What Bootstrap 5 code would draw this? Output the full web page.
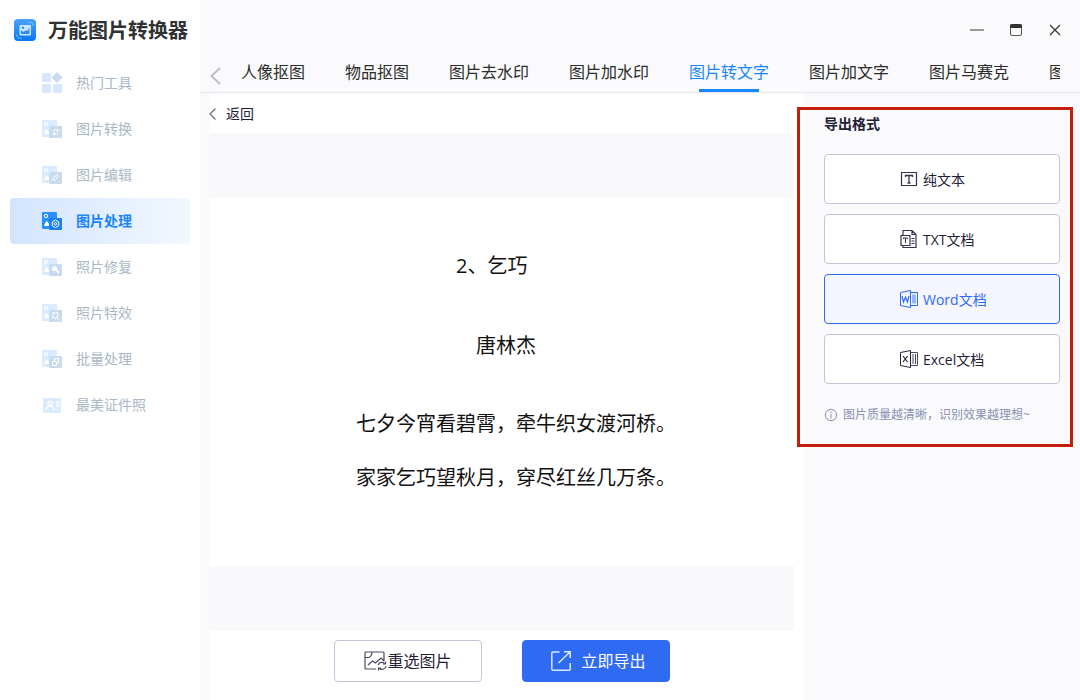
<!DOCTYPE html>
<html lang="zh-CN">
<head>
<meta charset="utf-8">
<meta name="viewport" content="width=device-width, initial-scale=1">
<title>万能图片转换器</title>
<link href="https://cdn.jsdelivr.net/npm/bootstrap@5.3.0/dist/css/bootstrap.min.css" rel="stylesheet">
<style>
body{font-family:"Open Sans","Noto Sans CJK SC",sans-serif;font-size:14px;line-height:20px;color:#1f2036;background:#fafafc}
svg{display:block;flex:none}
.sidebar{width:200px;background:#fff;flex:none}
.brand-row{height:62px;padding:0 12px;gap:10px;font-size:20px;color:#303133;white-space:nowrap}
.side-nav{margin:-2px 10px 0}
.side-link{height:46px;padding:0 30px;gap:12px;color:#aab7c6;border-radius:4px;text-decoration:none}
.side-link.active{color:#1a86fb;font-weight:700;background:linear-gradient(90deg,#d2e4ff,#f3f8ff)}
.side-link svg{--back:#daeaff;--front:#c9dbef}
.side-link.active svg{--back:#2b90ff;--front:#1a80f5}
.plain-btn{background:none;border:0;padding:0;color:#333}
.title-row{height:60px;padding:0 19px;gap:26px}
.tab-bar{height:33px;border-bottom:1px solid #e6e6ef;padding:0 20px 0 10px;gap:19px}
.tab-strip{gap:40px;overflow:hidden;flex:1 1 0;min-width:0;font-size:16px;line-height:24px}
.tab-strip a{color:#2b2b2b;text-decoration:none;white-space:nowrap;height:32px;position:relative}
.tab-strip a.active{color:#1a86fb}
.tab-strip a.active::after{content:"";position:absolute;left:10px;right:10px;bottom:0;height:3px;background:#1a86fb}
.work-area{background:#fff;margin-left:9px;padding-right:10px}
.back-row{height:40px;padding-top:2px;gap:10px;color:#1f2036}
.canvas-box{background:#f9f9fb;border-radius:4px;padding:65px 0}
.paper{background:#fff;padding:0 0 20px 147px;font-size:20px;line-height:54px;color:#111}
.paper p{margin:0;white-space:nowrap}
.paper .poem-title{text-indent:5em}
.paper .poem-author{text-indent:6em;padding:26px 0 24px}
.action-row{height:69px;gap:40px;padding-top:9px}
.action-btn{width:148px;height:42px;border-radius:4px;font-size:16px;padding:0;border:1px solid #c3c5da;background:#fff;color:#1f2036}
.action-btn.main-action{background:#2f6af3;border-color:#2f6af3;color:#fff;gap:10px;padding-left:6px}
.side-panel{width:276px;flex:none;padding:14px 7px 0 0}
.export-group{padding:7px 13px 0 20px;height:333px}
.export-group::before{content:"";position:absolute;inset:0 0 -7px -7px;border:3px solid #c41e0b;pointer-events:none}
.export-title{font-size:14px;line-height:20px;margin:0 0 20px}
.format-btn{height:50px;border:1px solid #c3c5da;border-radius:4px;background:#fff;color:#1f2036;gap:5px;padding:2px 0 0 75px}
.format-btn.active{border-color:#2f6af3;background:#f5f6ff;color:#2f6af3}
.hint-row{font-size:12px;color:#8b91b3;gap:5px;margin-top:21px;white-space:nowrap}
</style>
</head>
<body>
<svg width="0" height="0" class="position-absolute" aria-hidden="true">
  <defs>
    <g id="photo">
      <rect x="1" y="2" width="15" height="17" rx="1" fill="var(--back)"/>
      <circle cx="5" cy="6" r="1.700" fill="none" stroke="#fff"/>
      <path d="M3 16 5 11.500h1.500L8 14v2z" fill="#fff"/>
      <rect x="8" y="8" width="13" height="12" rx="1" fill="var(--front)"/>
    </g>
  </defs>
</svg>
<div class="d-flex min-vh-100">
  <aside class="sidebar">
    <div class="brand-row d-flex align-items-center fw-bold">
      <svg width="26" height="26" viewBox="0 0 26 26"><defs><linearGradient id="lg" x2="0" y2="1"><stop stop-color="#4ba2fd"/><stop offset="1" stop-color="#0878f4"/></linearGradient></defs><rect x="2" y="1" width="22" height="22" rx="4" fill="url(#lg)"/><rect x="7.500" y="7" width="11.500" height="10.500" rx="1" fill="#cfe5ff"/><path d="M9 16v-4l2.500 2 2.500-2 1.500 1 2-4v7z" fill="#2e8ef8"/><circle cx="11" cy="9.800" r="1.300" fill="#2e8ef8"/><path d="M16.500 4c3 0 4.500 1 5 4M9.500 20.500c-3 0-4.500-1-5-4" fill="none" stroke="#8fc4ff"/></svg>
      <span>万能图片转换器</span>
    </div>
    <nav class="side-nav d-flex flex-column">
      <a href="#" class="side-link d-flex align-items-center"><svg width="24" height="22" viewBox="-1 0 24 22"><g fill="#d7e7ff"><rect x="1" y="1" width="9" height="9" rx="1"/><rect x="1" y="12" width="9" height="9" rx="1"/><rect x="12" y="12" width="9" height="9" rx="1"/></g><path d="m16 0 5.500 5.500L16 11l-5.500-5.500z" fill="#c9dbef"/></svg>热门工具</a>
      <a href="#" class="side-link d-flex align-items-center"><svg width="24" height="22" viewBox="-1 0 24 22"><use href="#photo"/><path d="M12 13.500a3 3 0 0 1 5-1M17.500 14.500a3 3 0 0 1-5 1M17 11v2h-2M12.500 17v-2h2" fill="none" stroke="#fff"/></svg>图片转换</a>
      <a href="#" class="side-link d-flex align-items-center"><svg width="24" height="22" viewBox="-1 0 24 22"><use href="#photo"/><path d="M12 16.500v-2.200l3.700-3.500 1.700 1.700-3.500 3.700z" fill="none" stroke="#fff"/></svg>图片编辑</a>
      <a href="#" class="side-link active d-flex align-items-center"><svg width="24" height="22" viewBox="-1 0 24 22"><use href="#photo"/><path d="m14.500 10 3.200 1.900v3.800l-3.200 1.900-3.200-1.900v-3.800z" fill="none" stroke="#fff"/><circle cx="14.500" cy="13.800" r="1.200" fill="none" stroke="#fff"/></svg>图片处理</a>
      <a href="#" class="side-link d-flex align-items-center"><svg width="24" height="22" viewBox="-1 0 24 22"><use href="#photo"/><circle cx="13.500" cy="12.500" r="2.500" fill="#fff"/><path d="m14.500 13.500 3.500 3.500" stroke="#fff" stroke-width="2"/><path d="m12 10.500 1.500 1.700" stroke="#c9dbef"/></svg>照片修复</a>
      <a href="#" class="side-link d-flex align-items-center"><svg width="24" height="22" viewBox="-1 0 24 22"><use href="#photo"/><path d="m12 10.500 2 .5 2.500-.5v2.500l1 1.500-2 .5-.5 2-1.500-1.500-2 .5.500-2.500zM16 15.500l2 2" fill="none" stroke="#fff"/></svg>照片特效</a>
      <a href="#" class="side-link d-flex align-items-center"><svg width="24" height="22" viewBox="-1 0 24 22"><use href="#photo"/><path d="M11.500 13.500h4v4h-4zM13.500 13v-2.500h4v4.500H16" fill="none" stroke="#fff"/></svg>批量处理</a>
      <a href="#" class="side-link d-flex align-items-center"><svg width="24" height="22" viewBox="-1 0 24 22"><rect x="2" y="4" width="18" height="15" rx="1" fill="#daeaff"/><circle cx="9" cy="9.500" r="2" fill="none" stroke="#fff" stroke-width="1.300"/><path d="M5 16c.5-2.500 2-4 4-4s3.500 1.500 4 4M15 8.500h4M15 11.500h3" fill="none" stroke="#fff" stroke-width="1.300"/></svg>最美证件照</a>
    </nav>
  </aside>
  <div class="d-flex flex-column flex-grow-1" style="min-width:0">
    <div class="title-row d-flex align-items-center justify-content-end">
      <button class="plain-btn" aria-label="最小化"><svg width="14" height="12" viewBox="0 0 14 12"><path d="M0 6h14" stroke="#999" stroke-width="2"/></svg></button>
      <button class="plain-btn" aria-label="最大化"><svg width="13" height="12" viewBox="0 0 13 12"><rect x=".5" y=".5" width="11" height="11" rx="1.500" fill="none" stroke="#555"/><path d="M0 4V2Q0 0 2 0h8q2 0 2 2v2z" fill="#333"/></svg></button>
      <button class="plain-btn" aria-label="关闭"><svg width="12" height="12" viewBox="0 0 12 12"><path d="m1 1 10 10M11 1 1 11" stroke="#333" stroke-width="1.200"/></svg></button>
    </div>
    <div class="tab-bar d-flex">
      <button class="plain-btn" aria-label="向左"><svg width="12" height="18" viewBox="0 0 12 18"><path d="m10 1-8.500 8 8.500 8" fill="none" stroke="#c1c1c4" stroke-width="2"/></svg></button>
      <nav class="tab-strip d-flex">
        <a href="#">人像抠图</a><a href="#">物品抠图</a><a href="#">图片去水印</a><a href="#">图片加水印</a><a href="#" class="active">图片转文字</a><a href="#">图片加文字</a><a href="#">图片马赛克</a><a href="#">图</a>
      </nav>
    </div>
    <div class="d-flex flex-grow-1">
      <main class="work-area flex-grow-1 d-flex flex-column">
        <a href="#" class="back-row d-flex align-items-center text-decoration-none"><svg width="7" height="12" viewBox="0 0 7 12"><path d="M6.500.5 1 6l5.500 5.500" fill="none" stroke="#686880" stroke-width="1.200"/></svg>返回</a>
        <div class="canvas-box flex-grow-1 d-flex flex-column">
          <article class="paper flex-grow-1 d-flex flex-column justify-content-center">
            <p class="poem-title">2、乞巧</p>
            <p class="poem-author">唐林杰</p>
            <p>七夕今宵看碧霄，牵牛织女渡河桥。</p>
            <p>家家乞巧望秋月，穿尽红丝几万条。</p>
          </article>
        </div>
        <div class="action-row d-flex justify-content-center">
          <button class="action-btn d-flex align-items-center justify-content-center"><svg width="24" height="20" viewBox="-1 0 24 20"><g fill="none" stroke="#4a4a60" stroke-width="1.200"><path d="M12 18H2q-1 0-1-1V2q0-1 1-1h17q1 0 1 1v8M1 6.500h3q3.500 0 4-5.500M4 14l4.500-4 3 2L17 7l3 3"/><path d="M14 14a4 4 0 0 1 7-1M22 15a4 4 0 0 1-7 2M21.500 10.500V13H19M14.500 19.500V17H17"/></g></svg>重选图片</button>
          <button class="action-btn main-action d-flex align-items-center justify-content-center"><svg width="20" height="20" viewBox="0 0 20 20"><path d="M8.500 1H2Q.8 1 .8 2v16q0 1.200 1.200 1.200h16q1.200 0 1.200-1.200v-6M7.500 12 19 1M13 .8h6.200V7" fill="none" stroke="#dde7ff" stroke-width="1.500"/></svg>立即导出</button>
        </div>
      </main>
      <aside class="side-panel">
        <section class="export-group position-relative">
          <h2 class="export-title fw-bold">导出格式</h2>
          <div class="d-grid" style="gap:10px">
            <button class="format-btn d-flex align-items-center"><svg width="18" height="20" viewBox="0 0 18 20"><path d="M1.500 2.500h15v13h-15z" fill="none" stroke="#33334b" stroke-width="1.200"/><path d="M5.500 7V5.500h7V7M9 5.500v7.500M7.500 13h3" fill="none" stroke="#33334b" stroke-width="1.300"/></svg>纯文本</button>
            <button class="format-btn d-flex align-items-center"><svg width="18" height="20" viewBox="0 0 18 20"><path d="M3 5.500V.5h9l4 4v13H3v-2M12 .5v4h4M1 5.500h9v10H1zM11.500 8.500h3M11.500 11h3M11.500 13.500h3" fill="none" stroke="#33334b" stroke-width="1.200"/><path d="M3.500 9V8h4v1M5.500 8v5" fill="none" stroke="#33334b"/></svg>TXT文档</button>
            <button class="format-btn active d-flex align-items-center"><svg width="18" height="20" viewBox="0 0 18 20"><path d="M11 2.500h6.500v13H11" fill="none" stroke="#2f6af3"/><path d="M12 4.500h4v9h-4z" fill="#9ab4fa"/><path d="M.5 2.500 10.500.5v17l-10-2z" fill="none" stroke="#2f6af3"/><path d="m2 6 1.500 6 2-5 2 5L9 6" fill="none" stroke="#2f6af3" stroke-width="1.200"/></svg>Word文档</button>
            <button class="format-btn d-flex align-items-center"><svg width="18" height="20" viewBox="0 0 18 20"><path d="M11 2.500h6.500v13H11M13 4v10M15.500 4v10" fill="none" stroke="#4a4a60"/><path d="M.5 2.500 10.500.5v17l-10-2z" fill="none" stroke="#25253b"/><path d="m3 6 4.500 6M7.500 6 3 12" stroke="#25253b" stroke-width="1.200"/></svg>Excel文档</button>
          </div>
          <div class="hint-row d-flex align-items-center"><svg width="14" height="14" viewBox="0 0 14 14"><circle cx="7" cy="7" r="5.700" fill="none" stroke="#8b91b3"/><path d="M7 6v4.500M7 3.500v1.500" stroke="#8b91b3"/></svg><span>图片质量越清晰，识别效果越理想~</span></div>
        </section>
      </aside>
    </div>
  </div>
</div>
<script src="https://cdn.jsdelivr.net/npm/bootstrap@5.3.0/dist/js/bootstrap.bundle.min.js"></script>
</body>
</html>
